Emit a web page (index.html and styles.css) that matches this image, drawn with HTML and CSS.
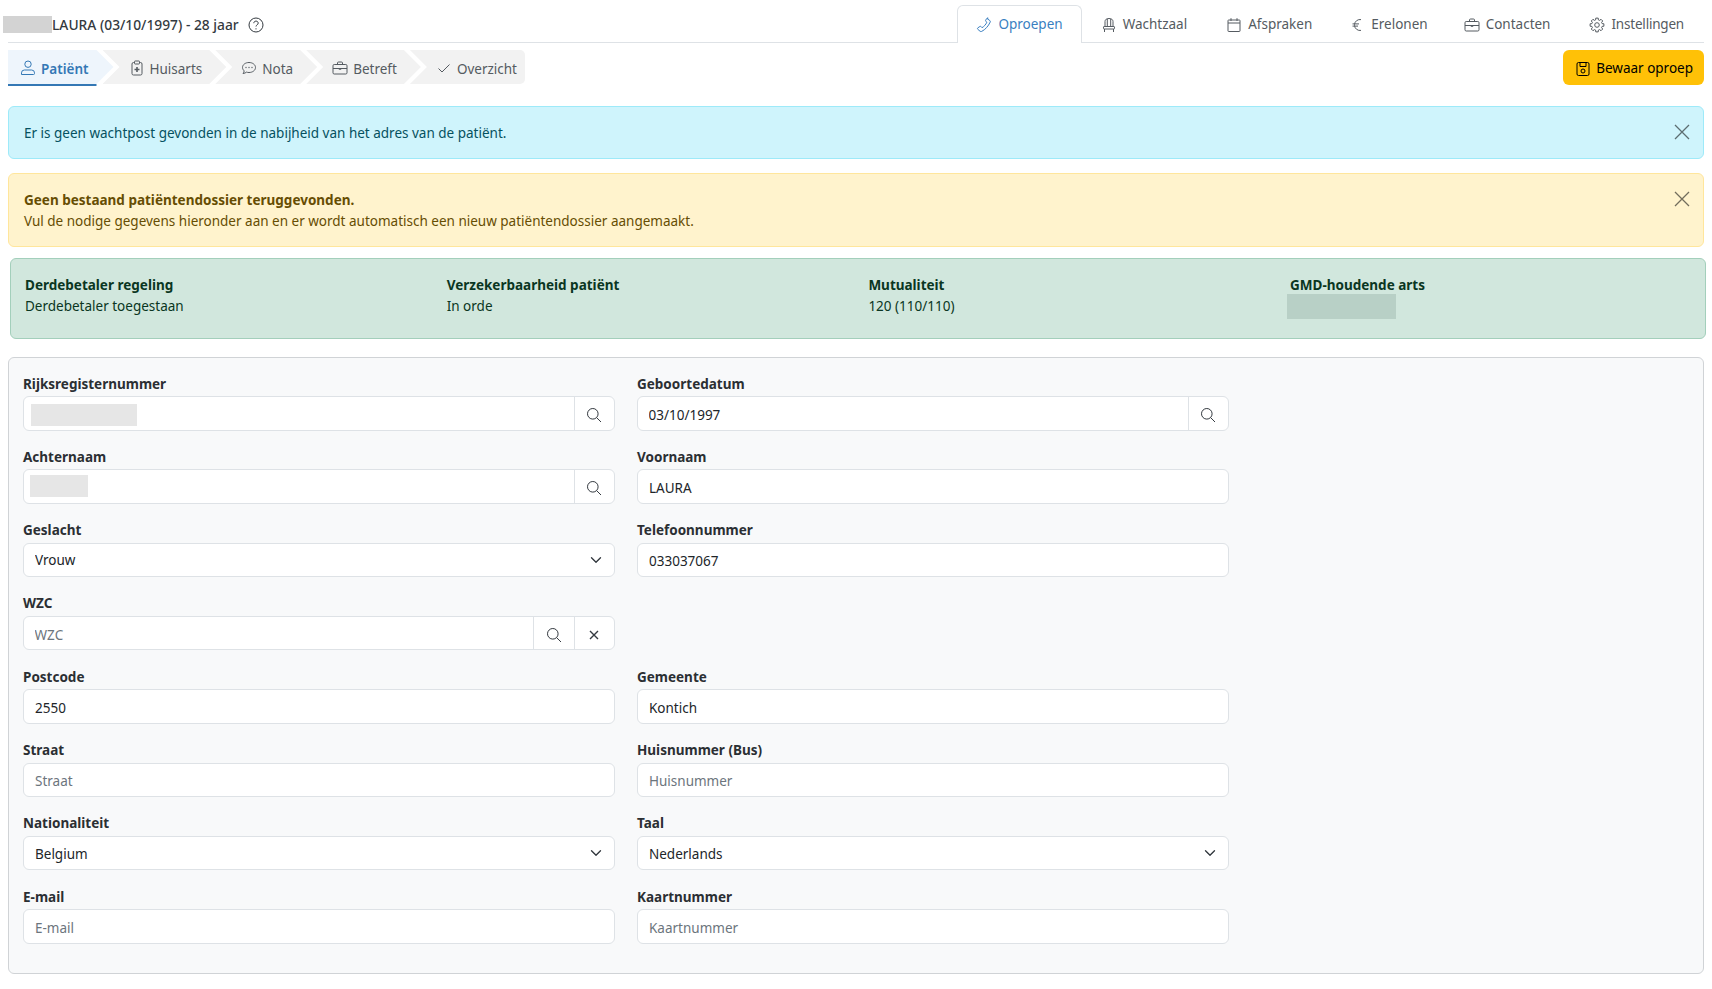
FILE: index.html
```html
<!DOCTYPE html>
<html lang="nl">
  <head>
    <meta charset="UTF-8" />
    <meta name="viewport" content="width=device-width, initial-scale=1.0" />
    <title>Oproepen</title>
    <link rel="stylesheet" href="styles.css">
  </head>
  <body>
    <svg class="icon-defs" aria-hidden="true">
      <symbol id="i-person" viewBox="0 0 16 16"><circle cx="8" cy="4.2" r="3.200"/><path d="M1.500 14.500v-1.600a2.900 2.900 0 0 1 2.900-2.900h7.200a2.900 2.900 0 0 1 2.900 2.900v.6a1 1 0 0 1-1 1z"/></symbol>
      <symbol id="i-clipboard" viewBox="0 0 16 16"><path d="M5.500 2.500H4.500a1.500 1.500 0 0 0-1.500 1.500v9.500a1.500 1.500 0 0 0 1.500 1.500h7a1.500 1.500 0 0 0 1.500-1.500V4a1.500 1.500 0 0 0-1.500-1.500h-1"/><rect x="5.500" y="1" width="5" height="3" rx=".6"/><path stroke-width="1.600" d="M8 7v5M5.500 9.500h5"/></symbol>
      <symbol id="i-chat" viewBox="0 0 16 16"><path d="M8 2.500c3.600 0 6.500 2.200 6.500 5s-2.900 5-6.500 5c-.9 0-1.700-.1-2.500-.4-.7.6-1.900 1.300-3.500 1.400.7-.8 1.100-1.700 1.200-2.600C2.300 10 1.500 8.800 1.500 7.500c0-2.800 2.900-5 6.500-5z"/><path stroke-linecap="round" stroke-width="1.300" d="M5 7.500h.01M8 7.500h.01M11 7.500h.01"/></symbol>
      <symbol id="i-briefcase" viewBox="0 0 16 16"><rect x="1" y="4.500" width="14" height="9.500" rx="1.200"/><path d="M5.500 4.500V3a1 1 0 0 1 1-1h3a1 1 0 0 1 1 1v1.500M1 8.500h14"/><path stroke-width="1.600" d="M6.800 9h2.400"/></symbol>
      <symbol id="i-check" viewBox="0 0 16 16"><path d="M2.500 8.500l3.500 3.500 7.500-7.500"/></symbol>
      <symbol id="i-phone" viewBox="0 0 16 16"><path d="M11.200 1.700l2.600 1.800c.5.4.7 1 .4 1.600-1.900 4.100-4.800 7.400-8.500 9.300-.6.3-1.200.2-1.700-.2l-2.200-1.900c-.5-.5-.4-1.200.1-1.500l2-1.300c.4-.3 1-.2 1.300.2l.8 1c2.100-1.200 3.800-3.200 4.900-5.400l-1-.8c-.4-.3-.5-.9-.2-1.300l1-1.700c.3-.5 1-.7 1.500-.3z"/></symbol>
      <symbol id="i-chair" viewBox="0 0 16 16"><path d="M4 9.500V4.500c0-2 1.700-3 4-3s4 1 4 3v5M6.300 9.500V1.800M9.700 9.500V1.800M3.500 12v3M12.500 12v3"/><rect x="2.500" y="9.500" width="11" height="2.500" rx=".6"/></symbol>
      <symbol id="i-calendar" viewBox="0 0 16 16"><rect x="2" y="3" width="12" height="11.500" rx=".6"/><path d="M2 6h12M5 1.200V4M11 1.200V4"/></symbol>
      <symbol id="i-euro" viewBox="0 0 16 16"><path d="M12 2.600A5.500 5.500 0 0 0 5.500 7.500v1a5.500 5.500 0 0 0 6.500 4.900M3.500 6.900h6.500M3.500 9.100h5.500"/></symbol>
      <symbol id="i-gear" viewBox="0 0 16 16"><circle cx="8" cy="8" r="2.300"/><polygon stroke-linejoin="round" points="6.780,1.110 9.220,1.110 9.370,2.880 10.650,3.410 12.010,2.270 13.730,3.990 12.590,5.350 13.120,6.630 14.890,6.780 14.890,9.220 13.120,9.370 12.590,10.650 13.730,12.010 12.010,13.730 10.650,12.590 9.370,13.120 9.220,14.890 6.780,14.890 6.630,13.120 5.350,12.590 3.990,13.730 2.270,12.010 3.410,10.650 2.880,9.370 1.110,9.220 1.110,6.780 2.880,6.630 3.410,5.350 2.270,3.990 3.990,2.270 5.350,3.410 6.630,2.880"/></symbol>
      <symbol id="i-help" viewBox="0 0 16 16"><circle cx="8" cy="8" r="7"/><path d="M5.800 6.200c0-1.300 1-2.100 2.200-2.100s2.200.8 2.200 2c0 1.800-2.200 1.800-2.200 3.400"/><path stroke-linecap="round" stroke-width="1.300" d="M8 11.800h.01"/></symbol>
      <symbol id="i-save" viewBox="0 0 16 16"><rect x="2" y="1.500" width="12" height="13" rx="1.500"/><path d="M5 1.500v4h6v-4"/><circle cx="8" cy="10" r="2"/></symbol>
      <symbol id="i-search" viewBox="0 0 16 16"><circle cx="6.800" cy="6.800" r="5.300"/><path d="M10.600 10.600L15 15"/></symbol>
      <symbol id="i-x" viewBox="0 0 16 16"><path stroke-width="1.400" d="M4 4l8 8M12 4l-8 8"/></symbol>
      <symbol id="i-close" viewBox="0 0 16 16"><path stroke-width="1.300" d="M1 1l14 14M15 1L1 15"/></symbol>
    </svg>

    <div class="page">
      <header class="top-bar">
        <div class="patient-title">
          <span class="redact-name"></span>
          <span>LAURA (03/10/1997) - 28 jaar</span>
          <svg class="icon help-icon"><use href="#i-help"/></svg>
        </div>
        <nav class="main-tabs">
          <a class="main-tab active"><svg class="icon"><use href="#i-phone"/></svg>Oproepen</a>
          <a class="main-tab"><svg class="icon"><use href="#i-chair"/></svg>Wachtzaal</a>
          <a class="main-tab"><svg class="icon"><use href="#i-calendar"/></svg>Afspraken</a>
          <a class="main-tab tab-euro"><svg class="icon"><use href="#i-euro"/></svg>Erelonen</a>
          <a class="main-tab"><svg class="icon"><use href="#i-briefcase"/></svg>Contacten</a>
          <a class="main-tab tab-settings"><svg class="icon"><use href="#i-gear"/></svg>Instellingen</a>
        </nav>
      </header>

      <div class="step-row">
        <div class="steps">
          <a class="step active"><svg class="icon"><use href="#i-person"/></svg>Patiënt</a>
          <a class="step"><svg class="icon"><use href="#i-clipboard"/></svg>Huisarts</a>
          <a class="step"><svg class="icon"><use href="#i-chat"/></svg>Nota</a>
          <a class="step"><svg class="icon"><use href="#i-briefcase"/></svg>Betreft</a>
          <a class="step"><svg class="icon"><use href="#i-check"/></svg>Overzicht</a>
        </div>
        <button class="btn-save" type="button"><svg class="icon"><use href="#i-save"/></svg>Bewaar oproep</button>
      </div>

      <div class="alert alert-info">
        Er is geen wachtpost gevonden in de nabijheid van het adres van de patiënt.
        <svg class="icon alert-close"><use href="#i-close"/></svg>
      </div>

      <div class="alert alert-warning">
        <strong>Geen bestaand patiëntendossier teruggevonden.</strong><br />
        Vul de nodige gegevens hieronder aan en er wordt automatisch een nieuw patiëntendossier aangemaakt.
        <svg class="icon alert-close"><use href="#i-close"/></svg>
      </div>

      <div class="insurance">
        <div><strong>Derdebetaler regeling</strong><br />Derdebetaler toegestaan</div>
        <div><strong>Verzekerbaarheid patiënt</strong><br />In orde</div>
        <div><strong>Mutualiteit</strong><br />120 (110/110)</div>
        <div class="gmd"><strong>GMD-houdende arts</strong><span class="redact-gmd"></span></div>
      </div>

      <form class="patient-form">
        <div class="field">
          <label class="label">Rijksregisternummer</label>
          <div class="input-group">
            <input class="text-input" type="text" />
            <span class="addon"><svg class="icon"><use href="#i-search"/></svg></span>
            <span class="redact-input redact-rr"></span>
          </div>
        </div>
        <div class="field">
          <label class="label">Geboortedatum</label>
          <div class="input-group">
            <input class="text-input" type="text" value="03/10/1997" />
            <span class="addon"><svg class="icon"><use href="#i-search"/></svg></span>
          </div>
        </div>
        <div class="field-end"></div>

        <div class="field">
          <label class="label">Achternaam</label>
          <div class="input-group">
            <input class="text-input" type="text" />
            <span class="addon"><svg class="icon"><use href="#i-search"/></svg></span>
            <span class="redact-input redact-last"></span>
          </div>
        </div>
        <div class="field">
          <label class="label">Voornaam</label>
          <input class="text-input" type="text" value="LAURA" />
        </div>
        <div class="field-end"></div>

        <div class="field">
          <label class="label">Geslacht</label>
          <select class="select-input"><option>Vrouw</option></select>
        </div>
        <div class="field">
          <label class="label">Telefoonnummer</label>
          <input class="text-input" type="text" value="033037067" />
        </div>
        <div class="field-end"></div>

        <div class="field">
          <label class="label">WZC</label>
          <div class="input-group">
            <input class="text-input" type="text" placeholder="WZC" />
            <span class="addon"><svg class="icon"><use href="#i-search"/></svg></span>
            <span class="addon"><svg class="icon"><use href="#i-x"/></svg></span>
          </div>
        </div>
        <div class="field-end wide"></div>

        <div class="field">
          <label class="label">Postcode</label>
          <input class="text-input" type="text" value="2550" />
        </div>
        <div class="field">
          <label class="label">Gemeente</label>
          <input class="text-input" type="text" value="Kontich" />
        </div>
        <div class="field-end"></div>

        <div class="field">
          <label class="label">Straat</label>
          <input class="text-input" type="text" placeholder="Straat" />
        </div>
        <div class="field">
          <label class="label">Huisnummer (Bus)</label>
          <input class="text-input" type="text" placeholder="Huisnummer" />
        </div>
        <div class="field-end"></div>

        <div class="field">
          <label class="label">Nationaliteit</label>
          <select class="select-input"><option>Belgium</option></select>
        </div>
        <div class="field">
          <label class="label">Taal</label>
          <select class="select-input"><option>Nederlands</option></select>
        </div>
        <div class="field-end"></div>

        <div class="field">
          <label class="label">E-mail</label>
          <input class="text-input" type="text" placeholder="E-mail" />
        </div>
        <div class="field">
          <label class="label">Kaartnummer</label>
          <input class="text-input" type="text" placeholder="Kaartnummer" />
        </div>
        <div class="field-end"></div>
      </form>
    </div>
  </body>
</html>
```

FILE: styles.css
```css
* {
  box-sizing: border-box;
  margin: 0;
  padding: 0;
}

body {
  background: #fff;
  color: #212529;
  font-family: "Noto Sans", "Open Sans", sans-serif;
  font-size: 13.5px;
  line-height: 21px;
}

.icon-defs {
  display: none;
}

.icon {
  display: block;
  flex: none;
  width: 16px;
  height: 16px;
  fill: none;
  stroke: currentColor;
  stroke-width: 1;
}

.page {
  padding: 0 8px 15px 8px;
}

/* top bar */
.top-bar {
  display: flex;
  justify-content: space-between;
  align-items: flex-end;
  height: 43px;
  padding-top: 5px;
  border-bottom: 1px solid #dee2e6;
}

.patient-title {
  display: flex;
  align-items: center;
  align-self: center;
  margin-left: -5px;
  margin-top: 2px;
  color: #343a40;
  font-size: 13.8px;
  font-weight: 500;
}

.redact-name {
  width: 49px;
  height: 17px;
  background: #d3d3d3;
}

.help-icon {
  margin-left: 9px;
}

.main-tabs {
  display: flex;
  height: 38px;
  margin-bottom: -1px;
}

.main-tab {
  display: flex;
  align-items: center;
  gap: 6px;
  padding: 0 19px 0 18px;
  border: 1px solid transparent;
  border-bottom: 0;
  color: #555b61;
}

.main-tab.active {
  padding: 0 18px;
  background: #fff;
  border-color: #dee2e6;
  border-radius: 6px 6px 0 0;
  color: #3a7fc1;
}

.main-tab.tab-euro {
  padding: 0 16px;
}

.main-tab.tab-settings {
  letter-spacing: -0.2px;
}

/* wizard steps */
.step-row {
  display: flex;
  justify-content: space-between;
  align-items: flex-start;
  margin-top: 7px;
  height: 36px;
}

.steps {
  display: flex;
  height: 36px;
}

.step {
  display: flex;
  align-items: center;
  gap: 5px;
  height: 34px;
  padding: 5px 24px 0 26px;
  margin-left: -11px;
  background: #f2f2f2;
  color: #555b61;
  clip-path: polygon(0 0, calc(100% - 17px) 0, 100% 50%, calc(100% - 17px) 100%, 0 100%, 17px 50%);
}

.step .icon {
  margin-top: -4px;
}

.step.active {
  height: 36px;
  padding: 3px 25px 0 12px;
  margin-left: 0;
  background: linear-gradient(#eef5fc 34px, #3478b5 34px);
  color: #3478b5;
  font-weight: 600;
  clip-path: polygon(0 0, calc(100% - 17px) 0, 100% 17px, calc(100% - 17px) 34px, calc(100% - 17px) 36px, 0 36px);
}

.step:last-child {
  padding-right: 8px;
  border-radius: 0 5px 5px 0;
  clip-path: polygon(0 0, 100% 0, 100% 100%, 0 100%, 17px 50%);
}

.btn-save {
  display: flex;
  align-items: center;
  gap: 5px;
  height: 35px;
  padding: 2px 11px 0 12px;
  background: #ffc107;
  border: 0;
  border-radius: 6px;
  color: #000;
  font: inherit;
}

/* alerts */
.alert {
  position: relative;
  padding: 16px 15px 14px 15px;
  border: 1px solid;
  border-radius: 6px;
}

.alert-info {
  margin-top: 20px;
  background: #cff4fc;
  border-color: #9eeaf9;
  color: #055160;
}

.alert-warning {
  margin-top: 14px;
  background: #fff3cd;
  border-color: #ffe69c;
  color: #664d03;
}

.alert-close {
  position: absolute;
  top: 17px;
  right: 13px;
  width: 16px;
  height: 16px;
  color: #000;
  opacity: 0.55;
}

.insurance {
  display: grid;
  grid-template-columns: repeat(3, 421.7px) 1fr;
  margin: 11px -2px 0 2px;
  padding: 16px 14px 21px 14px;
  background: #d1e7dd;
  border: 1px solid #a3cfbb;
  border-radius: 6px;
  color: #0a3622;
}

.gmd {
  position: relative;
}

.redact-gmd {
  position: absolute;
  top: 19px;
  left: -3px;
  width: 109px;
  height: 25px;
  background: #b8d0c6;
}

/* patient form */
.patient-form {
  display: grid;
  grid-template-columns: repeat(2, 592px) 1fr;
  column-gap: 22px;
  row-gap: 16.33px;
  margin-top: 18px;
  padding: 15.5px 14px 29px 14px;
  background: #f8f9fa;
  border: 1px solid #d0d3d6;
  border-radius: 6px;
}

.field-end.wide {
  grid-column: span 2;
}

.label {
  display: block;
  margin-bottom: 1.5px;
  color: #2b2f33;
  font-weight: 700;
}

.input-group {
  position: relative;
  display: flex;
  height: 34.5px;
  background: #fff;
  border: 1px solid #dee2e6;
  border-radius: 6px;
}

.text-input,
.select-input {
  display: block;
  width: 100%;
  height: 34.5px;
  padding: 2px 11px 0 11px;
  background: #fff;
  border: 1px solid #dee2e6;
  border-radius: 6px;
  color: #212529;
  font: inherit;
}

.text-input::placeholder {
  color: #6c757d;
  opacity: 1;
}

.input-group .text-input {
  flex: 1;
  min-width: 0;
  height: 100%;
  padding: 3px 10.5px 0 10.5px;
  background: transparent;
  border: 0;
}

.select-input {
  appearance: none;
  background-image: url("data:image/svg+xml,%3csvg xmlns='http://www.w3.org/2000/svg' viewBox='0 0 16 16'%3e%3cpath fill='none' stroke='%23343a40' stroke-linecap='round' stroke-linejoin='round' stroke-width='1.800' d='m2 5 6 6 6-6'/%3e%3c/svg%3e");
  background-repeat: no-repeat;
  background-position: right 12px center;
  background-size: 12px 12px;
}

.addon {
  display: flex;
  align-items: center;
  justify-content: center;
  flex: none;
  width: 40.5px;
  padding-top: 3px;
  border-left: 1px solid #dee2e6;
  color: #343a40;
}

.redact-input {
  position: absolute;
  background: #e6e6e6;
}

.redact-rr {
  top: 7px;
  left: 7px;
  width: 106px;
  height: 22px;
}

.redact-last {
  top: 5px;
  left: 6px;
  width: 58px;
  height: 22px;
}
```
